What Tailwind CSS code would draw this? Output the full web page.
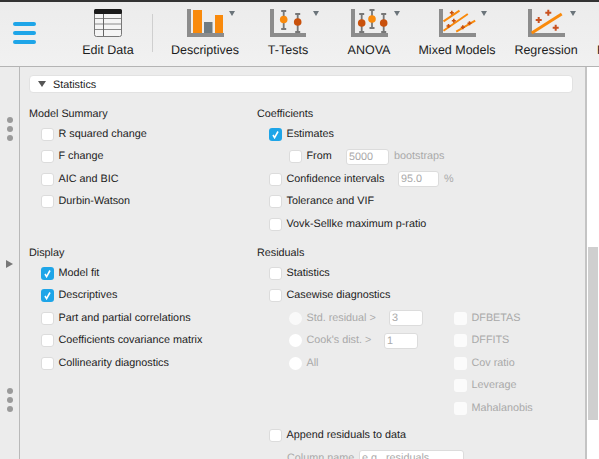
<!DOCTYPE html>
<html lang="en">
<head>
<meta charset="UTF-8">
<title>JASP - Linear Regression</title>
<script src="https://cdn.jsdelivr.net/npm/@tailwindcss/browser@4"></script>
</head>
<body class="w-[599px] h-[459px] overflow-hidden bg-white font-['Liberation_Sans',Arial,sans-serif] [text-rendering:geometricPrecision] text-[10.8px] text-[#222]">
<div class="flex flex-col h-[459px]">

  <!-- ribbon -->
  <header class="h-[67px] shrink-0 flex overflow-hidden border-t-2 border-b border-t-[#333] border-b-[#b4b4b4] bg-gradient-to-b from-[#ececec] to-[#f1f1f1] text-[12.5px] text-[#1c1c1c]">
    <div class="w-[64px] shrink-0 pl-[13px] pt-[20px] flex flex-col gap-[5px]">
      <div class="w-[23px] h-[4px] rounded-full bg-[#1ea5e8]"></div>
      <div class="w-[23px] h-[4px] rounded-full bg-[#1ea5e8]"></div>
      <div class="w-[23px] h-[4px] rounded-full bg-[#1ea5e8]"></div>
    </div>

    <div class="w-[88px] shrink-0 flex flex-col items-center pt-[6px]">
      <svg width="40" height="30" viewBox="0 0 40 30">
        <rect x="6.5" y="1.5" width="27" height="27" rx="2" fill="#f5f5f5" stroke="#777"/>
        <rect x="6" y="1" width="28" height="5" rx="1.5" fill="#1b1b1b"/>
        <path d="M7 10.5h26M7 16h26M7 21.5h26" stroke="#8a8a8a" fill="none"/>
        <path d="M15.5 6v22" stroke="#666" fill="none"/>
      </svg>
      <span class="mt-[4px] leading-[16px]">Edit Data</span>
    </div>

    <div class="w-px h-[38px] mt-[12px] shrink-0 bg-[#cfcfcf]"></div>

    <div class="relative w-[104px] shrink-0 flex flex-col items-center pt-[6px]">
      <svg width="40" height="30" viewBox="0 0 40 30">
        <rect x="2" y="1" width="4" height="28" fill="#8c8c8c"/>
        <rect x="2" y="25" width="37" height="4" fill="#8c8c8c"/>
        <rect x="8" y="2" width="9" height="23" fill="#f98a0c"/>
        <rect x="19" y="14" width="8.5" height="11" fill="#6f7b82"/>
        <rect x="30" y="7" width="8" height="18" fill="#f98a0c"/>
      </svg>
      <span class="mt-[4px] leading-[16px]">Descriptives</span>
      <div class="absolute left-[76px] top-[9px] w-0 h-0 border-x-[3.5px] border-x-transparent border-t-[5px] border-t-[#6b747a]"></div>
    </div>

    <div class="relative w-[62px] shrink-0 flex flex-col items-center pt-[6px]">
      <svg width="40" height="30" viewBox="0 0 40 30">
        <rect x="2" y="1" width="4" height="28" fill="#8c8c8c"/>
        <rect x="2" y="25" width="36" height="4" fill="#8c8c8c"/>
        <path d="M15.7 3v18M13.2 3h5M13.2 21h5M29.7 6v18M27.2 6h5M27.2 24h5" stroke="#777" stroke-width="1.8" fill="none"/>
        <circle cx="15.7" cy="11.5" r="3.8" fill="#f98a0c"/>
        <circle cx="29.7" cy="14" r="3.8" fill="#c9510c"/>
      </svg>
      <span class="mt-[4px] leading-[16px]">T-Tests</span>
      <div class="absolute left-[56px] top-[9px] w-0 h-0 border-x-[3.5px] border-x-transparent border-t-[5px] border-t-[#6b747a]"></div>
    </div>

    <div class="relative w-[100px] shrink-0 flex flex-col items-center pt-[6px]">
      <svg width="40" height="30" viewBox="0 0 40 30">
        <rect x="2" y="1" width="4" height="28" fill="#8c8c8c"/>
        <rect x="2" y="25" width="37" height="4" fill="#8c8c8c"/>
        <path d="M12.7 6v18M10.2 6h5M10.2 24h5M23 2v18M20.5 2h5M20.5 20h5M34.7 6v18M32.2 6h5M32.2 24h5" stroke="#777" stroke-width="1.8" fill="none"/>
        <circle cx="12.7" cy="15" r="3.8" fill="#c9510c"/>
        <circle cx="23" cy="11" r="3.8" fill="#f98a0c"/>
        <circle cx="34.7" cy="15" r="3.8" fill="#c9510c"/>
      </svg>
      <span class="mt-[4px] leading-[16px]">ANOVA</span>
      <div class="absolute left-[75px] top-[9px] w-0 h-0 border-x-[3.5px] border-x-transparent border-t-[5px] border-t-[#6b747a]"></div>
    </div>

    <div class="relative w-[76px] shrink-0 flex flex-col items-center pt-[6px]">
      <svg width="40" height="30" viewBox="0 0 40 30">
        <rect x="2" y="1" width="4" height="28" fill="#8c8c8c"/>
        <rect x="2" y="25" width="37" height="4" fill="#8c8c8c"/>
        <path d="M6.5 13.3L22.5 2.7M6.5 22.7L30.8 6M19.2 23.7L38.2 12.7" stroke="#f98a0c" stroke-width="2" fill="none"/>
        <path d="M12.8 4.7h4M14.8 2.7v4M14.8 12.7h4M16.8 10.7v4M9.5 18h4M11.5 16v4M23.8 19.3h4M25.8 17.3v4M30.5 15.3h4M32.5 13.3v4" stroke="#c9510c" stroke-width="1.6" fill="none"/>
      </svg>
      <span class="mt-[4px] leading-[16px] whitespace-nowrap">Mixed Models</span>
      <div class="absolute left-[62px] top-[9px] w-0 h-0 border-x-[3.5px] border-x-transparent border-t-[5px] border-t-[#6b747a]"></div>
    </div>

    <div class="relative w-[102px] shrink-0 flex flex-col items-center pt-[6px]">
      <svg width="40" height="30" viewBox="0 0 40 30">
        <rect x="2" y="1" width="4" height="28" fill="#8c8c8c"/>
        <rect x="2" y="25" width="37" height="4" fill="#8c8c8c"/>
        <path d="M5.7 25L35.7 6" stroke="#f98a0c" stroke-width="3" fill="none"/>
        <path d="M9.7 12h6M12.7 9v6M19.3 4.7h6M22.3 1.7v6M26.7 19.7h6M29.7 16.7v6" stroke="#c9511f" stroke-width="2" fill="none"/>
      </svg>
      <span class="mt-[4px] leading-[16px]">Regression</span>
      <div class="absolute left-[75px] top-[9px] w-0 h-0 border-x-[3.5px] border-x-transparent border-t-[5px] border-t-[#6b747a]"></div>
    </div>

    <div class="shrink-0 pt-[40px] leading-[16px]">Frequencies</div>
  </header>

  <div class="flex-1 min-h-0 flex overflow-hidden">
    <!-- left rail with splitter handles -->
    <aside class="relative w-[20px] shrink-0 bg-[#ececec] border-r border-r-[#b9b9b9] flex flex-col items-center">
      <div class="mt-[50px] flex flex-col gap-[3px]">
        <div class="w-[6px] h-[6px] rounded-full bg-[#9a9a9a]"></div>
        <div class="w-[6px] h-[6px] rounded-full bg-[#9a9a9a]"></div>
        <div class="w-[6px] h-[6px] rounded-full bg-[#9a9a9a]"></div>
      </div>
      <div class="mt-[119px] w-0 h-0 border-y-[4px] border-y-transparent border-l-[7px] border-l-[#777]"></div>
      <div class="mt-[120px] flex flex-col gap-[3px]">
        <div class="w-[6px] h-[6px] rounded-full bg-[#9a9a9a]"></div>
        <div class="w-[6px] h-[6px] rounded-full bg-[#9a9a9a]"></div>
        <div class="w-[6px] h-[6px] rounded-full bg-[#9a9a9a]"></div>
      </div>
    </aside>

    <!-- options panel -->
    <main class="w-[567px] shrink-0 bg-[#ececec] border-r-2 border-r-[#c4c4c4] pl-[9px] pr-[12px] pt-[8px] overflow-hidden">
      <div class="h-[18px] bg-white rounded-[4px] border border-[#e2e2e2] flex items-center pl-[7.5px] gap-[7.5px]">
        <div class="w-0 h-0 border-x-[4px] border-x-transparent border-t-[6px] border-t-[#555]"></div>
        <span class="mt-[2px]">Statistics</span>
      </div>

      <div class="grid grid-cols-[228px_1fr] gap-y-[9px] mt-[12.25px]">
        <section>
          <div class="h-[17.5px] leading-[18px]">Model Summary</div>
          <div class="flex items-center h-[22.5px] pl-[12px] gap-[4.5px]"><span class="w-[13px] h-[13px] rounded-[3px] bg-white border border-[#dcdcdc]"></span><span>R squared change</span></div>
          <div class="flex items-center h-[22.5px] pl-[12px] gap-[4.5px]"><span class="w-[13px] h-[13px] rounded-[3px] bg-white border border-[#dcdcdc]"></span><span>F change</span></div>
          <div class="flex items-center h-[22.5px] pl-[12px] gap-[4.5px]"><span class="w-[13px] h-[13px] rounded-[3px] bg-white border border-[#dcdcdc]"></span><span>AIC and BIC</span></div>
          <div class="flex items-center h-[22.5px] pl-[12px] gap-[4.5px]"><span class="w-[13px] h-[13px] rounded-[3px] bg-white border border-[#dcdcdc]"></span><span>Durbin-Watson</span></div>
        </section>

        <section>
          <div class="h-[17.5px] leading-[18px]">Coefficients</div>
          <div class="flex items-center h-[22.5px] pl-[12px] gap-[4.5px]">
            <span class="w-[13px] h-[13px] rounded-[3px] bg-[#1ea5e8] flex items-center justify-center"><svg width="9" height="9" viewBox="0 0 9 9"><path d="M2 5l1.6 2.6L7 1.5" stroke="#fff" stroke-width="1.6" fill="none"/></svg></span>
            <span>Estimates</span>
          </div>
          <div class="flex items-center h-[22.5px] pl-[32px]">
            <span class="w-[13px] h-[13px] rounded-[3px] bg-white border border-[#dcdcdc]"></span>
            <span class="ml-[4.5px] w-[39.5px]">From</span>
            <span class="w-[43px] h-[16px] rounded-[3px] bg-white border border-[#dcdcdc] pl-[2px] text-[#a9a9a9] leading-[14px]">5000</span>
            <span class="ml-[5px] text-[#a9a9a9]">bootstraps</span>
          </div>
          <div class="flex items-center h-[22.5px] pl-[12px]">
            <span class="w-[13px] h-[13px] rounded-[3px] bg-white border border-[#dcdcdc]"></span>
            <span class="ml-[4.5px] w-[111.5px]">Confidence intervals</span>
            <span class="w-[41px] h-[16px] rounded-[3px] bg-white border border-[#dcdcdc] pl-[2px] text-[#a9a9a9] leading-[14px]">95.0</span>
            <span class="ml-[5px] text-[#a9a9a9]">%</span>
          </div>
          <div class="flex items-center h-[22.5px] pl-[12px] gap-[4.5px]"><span class="w-[13px] h-[13px] rounded-[3px] bg-white border border-[#dcdcdc]"></span><span>Tolerance and VIF</span></div>
          <div class="flex items-center h-[22.5px] pl-[12px] gap-[4.5px]"><span class="w-[13px] h-[13px] rounded-[3px] bg-white border border-[#dcdcdc]"></span><span>Vovk-Sellke maximum p-ratio</span></div>
        </section>

        <section>
          <div class="h-[17.5px] leading-[18px]">Display</div>
          <div class="flex items-center h-[22.5px] pl-[12px] gap-[4.5px]">
            <span class="w-[13px] h-[13px] rounded-[3px] bg-[#1ea5e8] flex items-center justify-center"><svg width="9" height="9" viewBox="0 0 9 9"><path d="M2 5l1.6 2.6L7 1.5" stroke="#fff" stroke-width="1.6" fill="none"/></svg></span>
            <span>Model fit</span>
          </div>
          <div class="flex items-center h-[22.5px] pl-[12px] gap-[4.5px]">
            <span class="w-[13px] h-[13px] rounded-[3px] bg-[#1ea5e8] flex items-center justify-center"><svg width="9" height="9" viewBox="0 0 9 9"><path d="M2 5l1.6 2.6L7 1.5" stroke="#fff" stroke-width="1.6" fill="none"/></svg></span>
            <span>Descriptives</span>
          </div>
          <div class="flex items-center h-[22.5px] pl-[12px] gap-[4.5px]"><span class="w-[13px] h-[13px] rounded-[3px] bg-white border border-[#dcdcdc]"></span><span>Part and partial correlations</span></div>
          <div class="flex items-center h-[22.5px] pl-[12px] gap-[4.5px]"><span class="w-[13px] h-[13px] rounded-[3px] bg-white border border-[#dcdcdc]"></span><span>Coefficients covariance matrix</span></div>
          <div class="flex items-center h-[22.5px] pl-[12px] gap-[4.5px]"><span class="w-[13px] h-[13px] rounded-[3px] bg-white border border-[#dcdcdc]"></span><span>Collinearity diagnostics</span></div>
        </section>

        <section>
          <div class="h-[17.5px] leading-[18px]">Residuals</div>
          <div class="flex items-center h-[22.5px] pl-[12px] gap-[4.5px]"><span class="w-[13px] h-[13px] rounded-[3px] bg-white border border-[#dcdcdc]"></span><span>Statistics</span></div>
          <div class="flex items-center h-[22.5px] pl-[12px] gap-[4.5px]"><span class="w-[13px] h-[13px] rounded-[3px] bg-white border border-[#dcdcdc]"></span><span>Casewise diagnostics</span></div>

          <div class="grid grid-cols-[165px_1fr] pl-[32px] text-[#a9a9a9]">
            <div>
              <div class="flex items-center h-[22.5px]">
                <span class="w-[13px] h-[13px] rounded-full bg-white/70"></span>
                <span class="ml-[4.5px] w-[82.5px]">Std. residual &gt;</span>
                <span class="w-[34px] h-[16px] rounded-[3px] bg-white border border-[#dcdcdc] pl-[2px] leading-[14px]">3</span>
              </div>
              <div class="flex items-center h-[22.5px]">
                <span class="w-[13px] h-[13px] rounded-full bg-white"></span>
                <span class="ml-[4.5px] w-[77.5px]">Cook's dist. &gt;</span>
                <span class="w-[34px] h-[16px] rounded-[3px] bg-white border border-[#dcdcdc] pl-[2px] leading-[14px]">1</span>
              </div>
              <div class="flex items-center h-[22.5px] gap-[4.5px]"><span class="w-[13px] h-[13px] rounded-full bg-white"></span><span>All</span></div>
            </div>
            <div>
              <div class="flex items-center h-[22.5px] gap-[4.5px]"><span class="w-[13px] h-[13px] rounded-[3px] bg-white/80"></span><span>DFBETAS</span></div>
              <div class="flex items-center h-[22.5px] gap-[4.5px]"><span class="w-[13px] h-[13px] rounded-[3px] bg-white/80"></span><span>DFFITS</span></div>
              <div class="flex items-center h-[22.5px] gap-[4.5px]"><span class="w-[13px] h-[13px] rounded-[3px] bg-white/80"></span><span>Cov ratio</span></div>
              <div class="flex items-center h-[22.5px] gap-[4.5px]"><span class="w-[13px] h-[13px] rounded-[3px] bg-white/80"></span><span>Leverage</span></div>
              <div class="flex items-center h-[22.5px] gap-[4.5px]"><span class="w-[13px] h-[13px] rounded-[3px] bg-white/80"></span><span>Mahalanobis</span></div>
            </div>
          </div>

          <div class="flex items-center h-[22.5px] pl-[12px] gap-[4.5px] mt-[5px]"><span class="w-[13px] h-[13px] rounded-[3px] bg-white border border-[#dcdcdc]"></span><span>Append residuals to data</span></div>
          <div class="flex items-center h-[22.5px] pl-[30px] text-[#a9a9a9] whitespace-nowrap">
            <span class="w-[72px]">Column name</span>
            <span class="w-[105px] h-[16px] rounded-[3px] bg-white border border-[#dcdcdc] pl-[2px] leading-[14px]">e.g., residuals</span>
          </div>
        </section>
      </div>
    </main>

    <!-- scroll track -->
    <div class="flex-1 bg-white pl-[1px] pt-[180px]">
      <div class="w-[10px] h-[173px] bg-[#cfcfcf]"></div>
    </div>
  </div>
</div>
</body>
</html>
